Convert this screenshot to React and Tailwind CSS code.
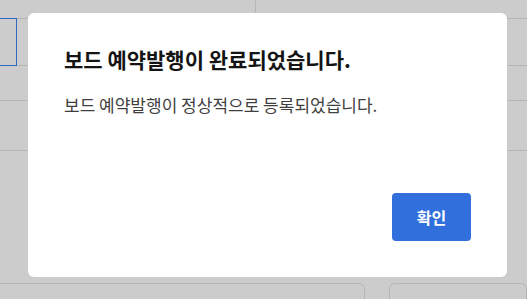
export default function App() {
  return (
    <div
      className="relative h-[299px] w-[527px] overflow-hidden bg-white"
      style={{ fontFamily: '"Noto Sans CJK KR", "Noto Sans", sans-serif' }}
    >
      {/* underlying page */}
      <div className="flex h-full flex-col">
        <div className="flex h-[18px]">
          <div className="w-[256px] border-r border-[#e4e4e4]" />
          <div className="flex-1" />
        </div>
        <div className="flex h-[48px] border-y border-[#e4e4e4]">
          <div className="-mt-px h-[48px] w-[17px] border border-l-0 border-[#3a82f0]" />
        </div>
        <div className="h-[35px] border-b border-[#e4e4e4]" />
        <div className="h-[50px] border-b border-[#e4e4e4]" />
        <div className="flex-1" />
        <div className="flex h-[16px] gap-[24px]">
          <div className="-ml-2 w-[373px] rounded-t-md border border-b-0 border-[#e4e4e4]" />
          <div className="flex-1 rounded-t-md border border-b-0 border-[#e4e4e4]" />
        </div>
      </div>

      {/* overlay */}
      <div className="absolute inset-0 bg-black/20" />

      {/* modal */}
      <div className="absolute left-[28px] top-[13px] flex h-[264px] w-[479px] flex-col rounded-md bg-white px-9 pb-9 pt-[32px]">
        <h2 className="text-[21px] font-bold leading-7 text-[#141414]">
          보드 예약발행이 완료되었습니다.
        </h2>
        <p className="mt-[20px] text-[17px] leading-6 text-[#3f3f3f]">
          보드 예약발행이 정상적으로 등록되었습니다.
        </p>
        <div className="mt-auto flex justify-end">
          <button className="h-[48px] w-[79px] rounded-[4px] bg-[#3170dc] text-[16px] font-bold text-white">
            확인
          </button>
        </div>
      </div>
    </div>
  );
}
